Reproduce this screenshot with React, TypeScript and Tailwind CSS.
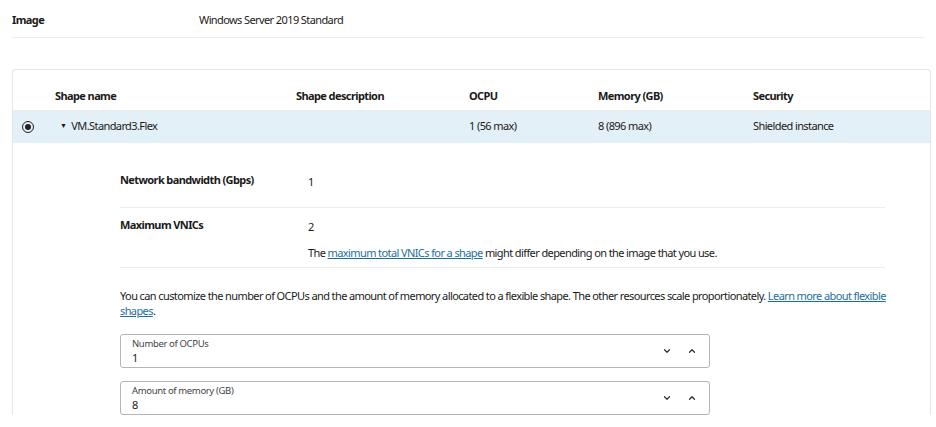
import { ChevronDown, ChevronUp } from "lucide-react";

const font = { fontFamily: '"Noto Sans", "Open Sans", sans-serif' };

function SpinField({ label, value }: { label: string; value: string }) {
  return (
    <div className="flex h-[34px] w-[590px] items-center rounded-[3px] border border-[#b5b5b5] pl-[11px] pr-[12px]">
      <div className="flex flex-1 flex-col leading-none">
        <span className="text-[9.5px] tracking-[-0.35px] text-[#444]">{label}</span>
        <span className="mt-[3px] text-[11px] text-[#222]">{value}</span>
      </div>
      <ChevronDown className="h-[10px] w-[10px] text-[#333]" strokeWidth={3} />
      <ChevronUp className="ml-[15px] h-[10px] w-[10px] text-[#333]" strokeWidth={3} />
    </div>
  );
}

export default function App() {
  return (
    <div className="h-[427px] w-[936px] overflow-hidden bg-white text-[11px] tracking-[-0.6px] text-[#1a1a1a]" style={font}>
      <div className="mx-[12px] flex h-[38px] items-center border-b border-[#ececec] pt-[3px]">
        <span className="w-[187px] font-bold">Image</span>
        <span>Windows Server 2019 Standard</span>
      </div>

      <div className="ml-[12px] mr-[5px] mt-[31px] rounded-t-[4px] border border-b-0 border-[#e6e6e6]">
        <div className="flex h-[41px] items-center border-b border-[#ececec] pt-[12px] font-bold">
          <span className="ml-[42px] w-[241px]">Shape name</span>
          <span className="w-[173px]">Shape description</span>
          <span className="w-[129px]">OCPU</span>
          <span className="w-[155px]">Memory (GB)</span>
          <span>Security</span>
        </div>
        <div className="flex h-[32px] items-center bg-[#e4f0f7] pb-[1px]">
          <span className="flex w-[42px] items-center">
            <span className="ml-[9px] flex h-[12px] w-[12px] items-center justify-center rounded-full border-[1.5px] border-[#222]">
              <span className="h-[6px] w-[6px] rounded-full bg-[#222]" />
            </span>
          </span>
          <span className="flex w-[241px] items-center">
            <span className="ml-[5px] text-[7px]">▼</span>
            <span className="ml-[5px]">VM.Standard3.Flex</span>
          </span>
          <span className="w-[173px]" />
          <span className="w-[129px]">1 (56 max)</span>
          <span className="w-[155px]">8 (896 max)</span>
          <span>Shielded instance</span>
        </div>

        <div className="pl-[107px] pr-[45px] pt-[29px]">
          <div className="flex h-[36px] border-b border-[#ececec]">
            <span className="w-[188px] font-bold">Network bandwidth (Gbps)</span>
            <span className="mt-[2px]">1</span>
          </div>
          <div className="flex h-[60px] border-b border-[#ececec] pt-[9px]">
            <span className="w-[188px] font-bold">Maximum VNICs</span>
            <div className="mt-[2px] flex flex-col">
              <span>2</span>
              <span className="mt-[9px]">
                The <a className="text-[#1a6fa0] underline">maximum total VNICs for a shape</a> might differ depending on the image that you use.
              </span>
            </div>
          </div>
          <p className="mt-[20px] w-[778px] leading-[15px]">
            You can customize the number of OCPUs and the amount of memory allocated to a flexible shape. The other resources scale proportionately.{" "}
            <a className="text-[#1a6fa0] underline">Learn more about flexible shapes</a>.
          </p>
          <div className="mt-[16px] flex flex-col gap-[13px]">
            <SpinField label="Number of OCPUs" value="1" />
            <SpinField label="Amount of memory (GB)" value="8" />
          </div>
        </div>
      </div>
    </div>
  );
}
